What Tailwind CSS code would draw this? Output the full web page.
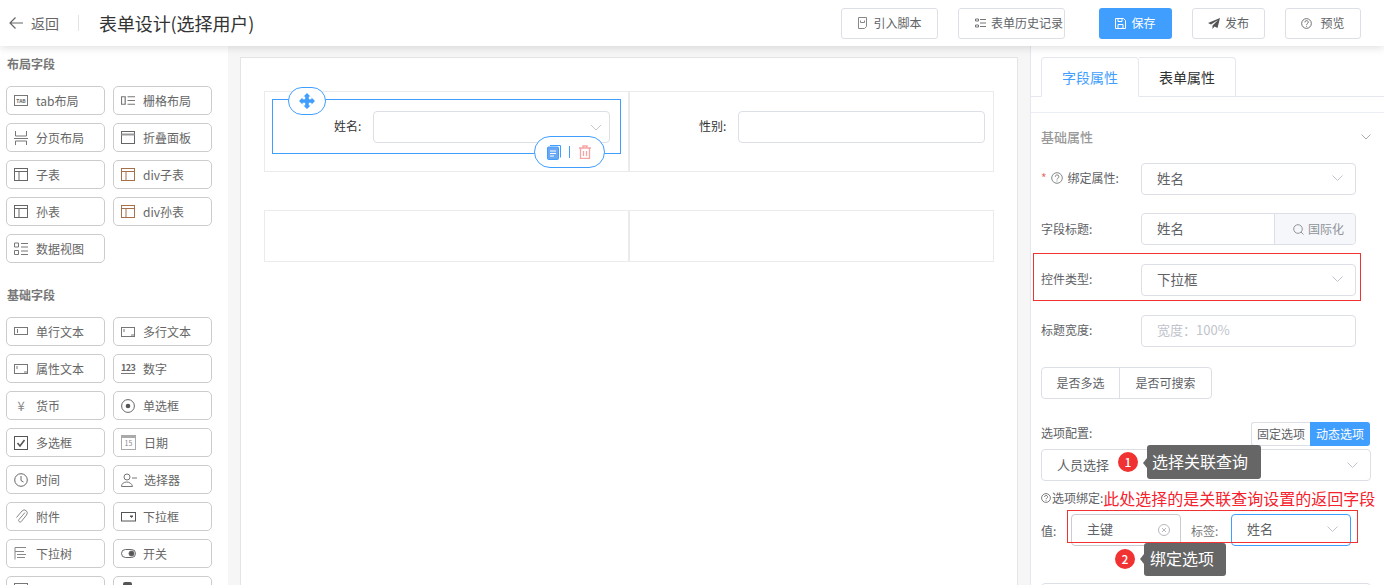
<!DOCTYPE html>
<html lang="zh">
<head>
<meta charset="utf-8">
<script src="https://cdn.jsdelivr.net/npm/@tailwindcss/browser@4"></script>
<title>表单设计</title>
</head>
<body class="font-['Noto_Sans_CJK_SC','Liberation_Sans',sans-serif] text-[#606266] bg-white">
<div class="relative w-[1384px] h-[585px] overflow-hidden flex flex-col">
  <header class="relative z-10 h-[46px] shrink-0 bg-white shadow-[0_2px_8px_rgba(0,0,0,0.12)] flex items-center">
    <svg class="ml-[9px] w-[14px] h-[14px]" viewBox="0 0 14 14" fill="none" stroke="#666" stroke-width="1.2"><path d="M1 7h13M6.5 1.5 1 7l5.5 5.5"/></svg>
    <span class="ml-[8px] text-[14px] text-[#666]">返回</span>
    <span class="ml-[19px] w-px h-[16px] bg-[#e4e4e4]"></span>
    <h1 class="ml-[20px] text-[18px] font-normal text-[#333] whitespace-nowrap tracking-[-0.1px]">表单设计(选择用户)</h1>
    <div class="ml-auto pr-[23px] flex items-center h-[31px] text-[12px]">
      <button class="w-[97px] h-[31px] border border-[#dcdfe6] rounded-[3px] flex items-center justify-center gap-[5px]"><svg class="w-[11px] h-[12px]" viewBox="0 0 11 12" fill="none" stroke="#888"><path d="M1.5.5h8v9l-2 2h-6zM3.5 3.5v2h4v-2"/></svg>引入脚本</button>
      <button class="ml-[20px] w-[107px] h-[31px] border border-[#dcdfe6] rounded-[3px] flex items-center pl-[16px] gap-[5px]"><svg class="w-[11px] h-[10px]" viewBox="0 0 11 10" fill="none" stroke="#777"><path d="M.5 1h3v2h-3zM.5 7h3v2h-3zM5 1.5h6M5 5h6M5 8.500h6"/></svg>表单历史记录</button>
      <button class="ml-[34px] w-[73px] h-[31px] bg-[#409eff] text-white rounded-[3px] flex items-center justify-center gap-[5px]"><svg class="w-[11px] h-[11px]" viewBox="0 0 11 11" fill="none" stroke="#fff"><path d="M.5.500h8l2 2v8h-10zM3 .5v3h4v-3M3 10.500v-4h5v4"/></svg>保存</button>
      <button class="ml-[20px] w-[73px] h-[31px] border border-[#dcdfe6] rounded-[3px] flex items-center justify-center gap-[5px]"><svg class="w-[12px] h-[11px]" viewBox="0 0 12 11" fill="#555"><path d="M12 0 0 5l3 1.500L10 2 4.500 7.500V11l2-2.500 3 1.500z"/></svg>发布</button>
      <button class="ml-[20px] w-[76px] h-[31px] border border-[#dcdfe6] rounded-[3px] flex items-center justify-center gap-[8px]"><svg class="w-[11px] h-[11px]" viewBox="0 0 12 12" fill="none" stroke="#666"><circle cx="6" cy="6" r="5.300"/><path d="M4.300 4.800a1.800 1.800 0 1 1 2.600 1.500c-.6.300-.9.600-.9 1.200M6 8.500v1"/></svg>预览</button>
    </div>
  </header>

  <div class="flex flex-1 min-h-0">
    <aside class="w-[228px] shrink-0 bg-white pl-[6px] overflow-hidden">
      <h3 class="pl-px mt-[10px] h-[16px] leading-[16px] text-[12px] font-bold text-[#777]">布局字段</h3>
      <div class="mt-[14px] grid grid-cols-[99px_99px] gap-x-[8px] gap-y-[8px] auto-rows-[29px] text-[12px] text-[#666]">
        <div class="border border-[#ccc] rounded-[5px] flex items-center pl-[7px] gap-[8px]"><span class="relative w-[14px] h-[11px] border border-[#777] text-[5px] leading-[9px] text-center font-bold">TAB</span>tab布局</div>
        <div class="border border-[#ccc] rounded-[5px] flex items-center pl-[7px] gap-[8px]"><svg class="w-[14px] h-[11px]" viewBox="0 0 15 11" fill="none" stroke="#777"><path d="M.5 1.500h4v8h-4zM7 1.500h8M7 5.500h8M7 9.500h8" stroke-width="1.300"/></svg>栅格布局</div>
        <div class="border border-[#ccc] rounded-[5px] flex items-center pl-[7px] gap-[8px]"><svg class="w-[14px] h-[14px]" viewBox="0 0 14 14" fill="none" stroke="#777"><path d="M1.500 0v5h11V0M0 7.500h14M1.500 14V10h11v4"/></svg>分页布局</div>
        <div class="border border-[#ccc] rounded-[5px] flex items-center pl-[7px] gap-[8px]"><svg class="w-[14px] h-[13px]" viewBox="0 0 14 13" fill="none" stroke="#666"><rect x=".5" y=".5" width="13" height="12"/><path d="M.5 3.500h13" stroke-width="2" stroke="#999"/></svg>折叠面板</div>
        <div class="border border-[#ccc] rounded-[5px] flex items-center pl-[7px] gap-[8px]"><svg class="w-[14px] h-[13px]" viewBox="0 0 14 13" fill="none" stroke="#666"><rect x=".5" y=".5" width="13" height="12"/><path d="M.5 3.500h13M5 3.500v9"/></svg>子表</div>
        <div class="border border-[#ccc] rounded-[5px] flex items-center pl-[7px] gap-[8px]"><svg class="w-[14px] h-[13px]" viewBox="0 0 14 13" fill="none" stroke="#a5704a"><rect x=".5" y=".5" width="13" height="12"/><path d="M.5 3.500h13M5 3.500v9"/></svg>div子表</div>
        <div class="border border-[#ccc] rounded-[5px] flex items-center pl-[7px] gap-[8px]"><svg class="w-[14px] h-[13px]" viewBox="0 0 14 13" fill="none" stroke="#666"><rect x=".5" y=".5" width="13" height="12"/><path d="M.5 3.500h13M5 3.500v9"/></svg>孙表</div>
        <div class="border border-[#ccc] rounded-[5px] flex items-center pl-[7px] gap-[8px]"><svg class="w-[14px] h-[13px]" viewBox="0 0 14 13" fill="none" stroke="#a5704a"><rect x=".5" y=".5" width="13" height="12"/><path d="M.5 3.500h13M5 3.500v9"/></svg>div孙表</div>
        <div class="border border-[#ccc] rounded-[5px] flex items-center pl-[7px] gap-[8px]"><svg class="w-[14px] h-[14px]" viewBox="0 0 14 14" fill="none" stroke="#777"><path d="M.5 1h4v4h-4zM.5 8.500h4v4h-4zM7 1.500h7M7 5h7M7 9h7M7 12.500h7"/></svg>数据视图</div>
      </div>
      <h3 class="pl-px mt-[24px] h-[16px] leading-[16px] text-[12px] font-bold text-[#777]">基础字段</h3>
      <div class="mt-[14px] grid grid-cols-[99px_99px] gap-x-[8px] gap-y-[8px] auto-rows-[29px] text-[12px] text-[#666]">
        <div class="border border-[#ccc] rounded-[5px] flex items-center pl-[7px] gap-[8px]"><svg class="w-[14px] h-[9px]" viewBox="0 0 14 9" fill="none" stroke="#777"><rect x=".5" y=".5" width="13" height="7"/><path d="M3.500 2v4"/></svg>单行文本</div>
        <div class="border border-[#ccc] rounded-[5px] flex items-center pl-[7px] gap-[8px]"><svg class="w-[14px] h-[10px]" viewBox="0 0 14 10" fill="none" stroke="#777"><rect x=".5" y=".5" width="13" height="9"/><path d="M3 2v3M10 8h3"/></svg>多行文本</div>
        <div class="border border-[#ccc] rounded-[5px] flex items-center pl-[7px] gap-[8px]"><svg class="w-[14px] h-[10px]" viewBox="0 0 14 10" fill="none" stroke="#777"><rect x=".5" y=".5" width="13" height="9"/><path d="M3 2v3M10 8h3"/></svg>属性文本</div>
        <div class="border border-[#ccc] rounded-[5px] flex items-center pl-[7px] gap-[8px]"><span class="w-[14px] border-b border-[#777] text-[9px] leading-[10px] font-bold text-[#666] tracking-[-0.5px]">123</span>数字</div>
        <div class="border border-[#ccc] rounded-[5px] flex items-center pl-[7px] gap-[8px]"><span class="w-[14px] text-center text-[13px] leading-[14px] text-[#888]">¥</span>货币</div>
        <div class="border border-[#ccc] rounded-[5px] flex items-center pl-[7px] gap-[8px]"><svg class="w-[14px] h-[14px]" viewBox="0 0 14 14" fill="none" stroke="#666"><circle cx="7" cy="7" r="6.400"/><circle cx="7" cy="7" r="2.300" fill="#555" stroke="none"/></svg>单选框</div>
        <div class="border border-[#ccc] rounded-[5px] flex items-center pl-[7px] gap-[8px]"><svg class="w-[14px] h-[14px]" viewBox="0 0 14 14" fill="none" stroke="#555"><rect x=".5" y=".5" width="13" height="13"/><path d="M3.500 7l2.500 3 4.500-6" stroke-width="1.600"/></svg>多选框</div>
        <div class="border border-[#ccc] rounded-[5px] flex items-center pl-[7px] gap-[8px]"><span class="w-[15px] h-[15px] border border-[#aaa] border-t-[3px] text-[7px] leading-[11px] text-center text-[#888]">15</span>日期</div>
        <div class="border border-[#ccc] rounded-[5px] flex items-center pl-[7px] gap-[8px]"><svg class="w-[14px] h-[14px]" viewBox="0 0 14 14" fill="none" stroke="#666"><circle cx="7" cy="7" r="6.300"/><path d="M7 3v4.500l2.500 1.500"/></svg>时间</div>
        <div class="border border-[#ccc] rounded-[5px] flex items-center pl-[7px] gap-[7px]"><svg class="w-[16px] h-[14px]" viewBox="0 0 16 14" fill="none" stroke="#777"><circle cx="6" cy="4" r="3"/><path d="M.5 13.500c0-6 10-6 11 0zM11 5h5" /></svg>选择器</div>
        <div class="border border-[#ccc] rounded-[5px] flex items-center pl-[7px] gap-[8px]"><svg class="w-[14px] h-[15px]" viewBox="0 0 14 15" fill="none" stroke="#888"><path d="M11 3.500 5 10.500a1.500 1.500 0 0 0 2.300 2L12.500 6a3 3 0 0 0-4.500-4L2.500 8.500"/></svg>附件</div>
        <div class="border border-[#ccc] rounded-[5px] flex items-center pl-[7px] gap-[7px]"><svg class="w-[15px] h-[10px]" viewBox="0 0 15 10" fill="none" stroke="#555"><rect x=".5" y=".5" width="14" height="8.500"/><path d="M9 4h3l-1.500 1.500z" fill="#555"/></svg>下拉框</div>
        <div class="border border-[#ccc] rounded-[5px] flex items-center pl-[7px] gap-[9px]"><svg class="w-[13px] h-[13px]" viewBox="0 0 13 13" fill="none" stroke="#888"><path d="M1 .5h11M1 .5v12M1 4.500h9M3 7.500h9M3 10.500h8"/></svg>下拉树</div>
        <div class="border border-[#ccc] rounded-[5px] flex items-center pl-[7px] gap-[7px]"><svg class="w-[15px] h-[9px]" viewBox="0 0 15 9" fill="none" stroke="#666"><rect x=".5" y=".5" width="14" height="8" rx="4"/><circle cx="10.500" cy="4.500" r="2.500" fill="#555"/></svg>开关</div>
        <div class="border border-[#ccc] rounded-[5px] flex items-start pl-[7px] pt-[6px]"><svg class="w-[14px] h-[10px]" viewBox="0 0 14 10" fill="none" stroke="#777"><rect x=".5" y=".5" width="13" height="9"/></svg></div>
        <div class="border border-[#ccc] rounded-[5px] flex items-start pl-[9px] pt-[5px]"><span class="w-[9px] h-[8px] bg-[#555] rounded-t-[2px]"></span></div>
      </div>
    </aside>

    <main class="w-[802px] shrink-0 bg-[#f6f6f6] pt-[11px] px-[12px]">
      <div class="h-[600px] bg-white border border-[#e4e4e4] pt-[33px] pl-[23px]">
        <div class="w-[730px] h-[81px] border border-[#ebebeb] grid grid-cols-[365px_1fr] text-[12px] text-[#333]">
          <div class="relative border-r-2 border-[#ebebeb]">
            <div class="absolute left-[7px] top-[7px] w-[349px] h-[55px] border border-[#409eff] flex items-start pt-[11px] pl-[61px]">
              <span class="w-[27px] mt-[6px] shrink-0 whitespace-nowrap">姓名:</span>
              <div class="ml-[12px] w-[237px] h-[32px] border border-[#dcdfe6] rounded-[4px] flex items-center justify-end pr-[7px]">
                <svg class="w-[12px] h-[7px]" viewBox="0 0 12 7" fill="none" stroke="#c5c8cf"><path d="M1 1l5 5 5-5"/></svg>
              </div>
            </div>
            <div class="absolute left-[23px] top-[-5px] w-[38px] h-[28px] bg-white border border-[#409eff] rounded-[14px] flex items-center justify-center">
              <svg class="w-[16px] h-[16px]" viewBox="0 0 16 16" fill="#409eff"><path d="M8 0l3.500 3.500H9.800v2.700h2.700V4.500L16 8l-3.500 3.500V9.800H9.800v2.700h1.700L8 16l-3.500-3.500h1.700V9.800H3.500v1.700L0 8l3.500-3.500v1.700h2.700V3.500H4.500z"/></svg>
            </div>
            <div class="absolute left-[269px] top-[44px] w-[71px] h-[32px] bg-white border border-[#409eff] rounded-[16px] flex items-center justify-center gap-[8px]">
              <svg class="w-[14px] h-[15px]" viewBox="0 0 14 15" fill="none"><path d="M3 .5h10.500v12" stroke="#409eff"/><rect x=".5" y="2" width="11" height="12.500" rx="1" fill="#6aa8f5" stroke="#409eff"/><path d="M3 6h6M3 8.500h6M3 11h4" stroke="#fff"/></svg>
              <span class="w-px h-[12px] bg-[#409eff]"></span>
              <svg class="w-[14px] h-[14px]" viewBox="0 0 14 14" fill="none" stroke="#f5a3a3" stroke-width="1.300"><path d="M1 3h12M5 3V1h4v2M2.500 3v10.500h9V3M5.500 6v5M8.500 6v5"/></svg>
            </div>
          </div>
          <div class="flex items-start pt-[19px] pl-[69px]">
            <span class="w-[27px] mt-[6px] shrink-0 whitespace-nowrap">性别:</span>
            <div class="ml-[12px] w-[247px] h-[32px] border border-[#dcdfe6] rounded-[4px]"></div>
          </div>
        </div>
        <div class="mt-[38px] w-[730px] h-[52px] border border-[#ebebeb] grid grid-cols-[365px_1fr]">
          <div class="border-r-2 border-[#ebebeb]"></div>
          <div></div>
        </div>
      </div>
    </main>

    <section class="w-[354px] min-w-0 shrink-0 bg-white border-l border-[#e4e7ed] text-[12px] text-[#606266]">
      <div class="h-[51px] pt-[11px] pl-[10px] border-b border-[#e4e7ed] flex">
        <div class="w-[98px] h-[40px] border border-[#e4e7ed] border-b-white rounded-t-[4px] flex items-center justify-center text-[14px] text-[#409eff]">字段属性</div>
        <div class="w-[97px] h-[40px] border border-l-0 border-[#e4e7ed] rounded-tr-[4px] flex items-center justify-center text-[14px] text-[#303133]">表单属性</div>
      </div>
      <div class="mt-[15px] border-t border-[#ebeef5] pl-[10px] pr-[13px]">
        <div class="h-[50px] pb-[2px] flex items-center justify-between">
          <span class="text-[13px] font-medium text-[#999]">基础属性</span>
          <svg class="w-[10px] h-[6px]" viewBox="0 0 10 6" fill="none" stroke="#aaa"><path d="M.5.500 5 5 9.500.500"/></svg>
        </div>
        <div class="flex items-center h-[32px]">
          <span class="w-[100px] shrink-0 flex items-center whitespace-nowrap pb-[2px]"><span class="text-[#f56c6c] mr-[4px]">*</span><svg class="w-[12px] h-[12px] mr-[5px]" viewBox="0 0 12 12" fill="none" stroke="#888"><circle cx="6" cy="6" r="5.300"/><path d="M4.300 4.800a1.800 1.800 0 1 1 2.600 1.500c-.6.300-.9.600-.9 1.200M6 8.500v1"/></svg>绑定属性:</span>
          <div class="w-[215px] h-[32px] border border-[#dcdfe6] rounded-[4px] pl-[15px] pr-[12px] pb-[2px] flex items-center justify-between text-[13.500px]">姓名<svg class="w-[11px] h-[6px]" viewBox="0 0 11 6" fill="none" stroke="#c0c4cc"><path d="M.5.500l5 5 5-5"/></svg></div>
        </div>
        <div class="mt-[18px] flex items-center h-[32px]">
          <span class="w-[100px] shrink-0">字段标题:</span>
          <div class="w-[215px] h-[32px] border border-[#dcdfe6] rounded-[4px] flex items-center text-[13.500px]">
            <span class="w-[132px] pl-[15px] pb-[2px]">姓名</span>
            <span class="flex-1 h-full bg-[#f5f7fa] border-l border-[#dcdfe6] rounded-r-[4px] flex items-center justify-end pr-[11px] gap-[4px] text-[12px] text-[#909399]"><svg class="w-[11px] h-[11px]" viewBox="0 0 11 11" fill="none" stroke="#909399"><circle cx="5" cy="5" r="4.300"/><path d="M8 8l2.500 2.500"/></svg>国际化</span>
          </div>
        </div>
        <div class="mt-[19px] flex items-center h-[32px]">
          <span class="w-[100px] shrink-0 pb-[2px]">控件类型:</span>
          <div class="w-[215px] h-[32px] border border-[#dcdfe6] rounded-[4px] pl-[15px] pr-[12px] pb-[2px] flex items-center justify-between text-[13.500px]">下拉框<svg class="w-[11px] h-[6px]" viewBox="0 0 11 6" fill="none" stroke="#c0c4cc"><path d="M.5.500l5 5 5-5"/></svg></div>
        </div>
        <div class="mt-[19px] flex items-center h-[32px]">
          <span class="w-[100px] shrink-0 pb-[2px]">标题宽度:</span>
          <div class="w-[215px] h-[32px] border border-[#dcdfe6] rounded-[4px] pl-[15px] pb-[2px] flex items-center text-[13px] text-[#c0c4cc]">宽度：100%</div>
        </div>
        <div class="mt-[20px] w-[171px] h-[32px] border border-[#dcdfe6] rounded-[4px] flex items-center">
          <span class="w-[78px] h-full border-r border-[#dcdfe6] flex items-center justify-center">是否多选</span>
          <span class="flex-1 text-center">是否可搜索</span>
        </div>
        <div class="mt-[23px] flex items-end h-[24px] justify-between w-[329px]">
          <span class="mb-[4px]">选项配置:</span>
          <div class="flex h-[24px] items-stretch">
            <span class="w-[59px] border border-[#dcdfe6] border-r-0 rounded-l-[3px] flex items-center justify-center text-[12px]">固定选项</span>
            <span class="w-[60px] bg-[#409eff] text-white rounded-r-[3px] flex items-center justify-center text-[12px]">动态选项</span>
          </div>
        </div>
        <div class="mt-[3px] w-[330px] h-[32px] border border-[#dcdfe6] rounded-[4px] pl-[15px] pr-[12px] flex items-center justify-between text-[13px]">人员选择<svg class="w-[11px] h-[6px]" viewBox="0 0 11 6" fill="none" stroke="#c0c4cc"><path d="M.5.500l5 5 5-5"/></svg></div>
        <div class="mt-[5px] h-[24px] flex items-center whitespace-nowrap w-[330px]">
          <svg class="shrink-0 w-[10px] h-[10px] mr-[1px]" viewBox="0 0 12 12" fill="none" stroke="#666"><circle cx="6" cy="6" r="5.300"/><path d="M4.300 4.800a1.800 1.800 0 1 1 2.600 1.500c-.6.300-.9.600-.9 1.200M6 8.500v1"/></svg><span class="shrink-0 text-[12px]">选项绑定:</span><span class="shrink-0 text-[16px] text-[#f5222d]">此处选择的是关联查询设置的返回字段</span>
        </div>
        <div class="mt-[4px] flex items-center h-[32px]">
          <span class="w-[30px] shrink-0 pt-[2px]">值:</span>
          <div class="w-[110px] h-[32px] border border-[#c9ccd3] rounded-[4px] pl-[15px] pr-[10px] pb-[2px] flex items-center justify-between text-[13px]">主键<svg class="w-[12px] h-[12px] mt-[2px]" viewBox="0 0 12 12" fill="none" stroke="#b5b8bf"><circle cx="6" cy="6" r="5.500"/><path d="M4 4l4 4M8 4l-4 4"/></svg></div>
          <span class="ml-[10px] w-[40px] shrink-0 pt-[2px] text-[#777]">标签:</span>
          <div class="w-[120px] h-[32px] border border-[#409eff] rounded-[4px] pl-[15px] pr-[12px] pb-[2px] flex items-center justify-between text-[13px]">姓名<svg class="w-[11px] h-[6px]" viewBox="0 0 11 6" fill="none" stroke="#c0c4cc"><path d="M.5.500l5 5 5-5"/></svg></div>
        </div>
        <div class="mt-[37px] w-[330px] h-[32px] border border-[#dcdfe6] rounded-[4px]"></div>
      </div>
    </section>
  </div>

  <!-- annotations over the screenshot -->
  <div class="absolute z-20 left-[1033px] top-[253px] w-[328px] h-[48px] border border-[#f03232]"></div>
  <div class="absolute z-20 left-[1067px] top-[510px] w-[291px] h-[33px] border border-[#f03232]"></div>
  <div class="absolute z-30 left-[1118px] top-[452px] w-[20px] h-[20px] rounded-full bg-[#f03232] text-white text-[12px] font-medium flex items-center justify-center">1</div>
  <div class="absolute z-30 left-[1147px] top-[445px] w-[114px] h-[34px] rounded-[3px] bg-[#666] text-white text-[16px] pl-[5px] pb-[2px] flex items-center whitespace-nowrap">选择关联查询</div>
  <div class="absolute z-30 left-[1143px] top-[458px] w-0 h-0 border-y-[5px] border-y-transparent border-r-[4px] border-r-[#666]"></div>
  <div class="absolute z-30 left-[1115px] top-[549px] w-[20px] h-[20px] rounded-full bg-[#f03232] text-white text-[12px] font-medium flex items-center justify-center">2</div>
  <div class="absolute z-30 left-[1144px] top-[543px] w-[82px] h-[33px] rounded-[3px] bg-[#666] text-white text-[16px] pl-[6px] pb-[3px] flex items-center whitespace-nowrap">绑定选项</div>
  <div class="absolute z-30 left-[1140px] top-[554px] w-0 h-0 border-y-[5px] border-y-transparent border-r-[4px] border-r-[#666]"></div>
</div>
</body>
</html>
